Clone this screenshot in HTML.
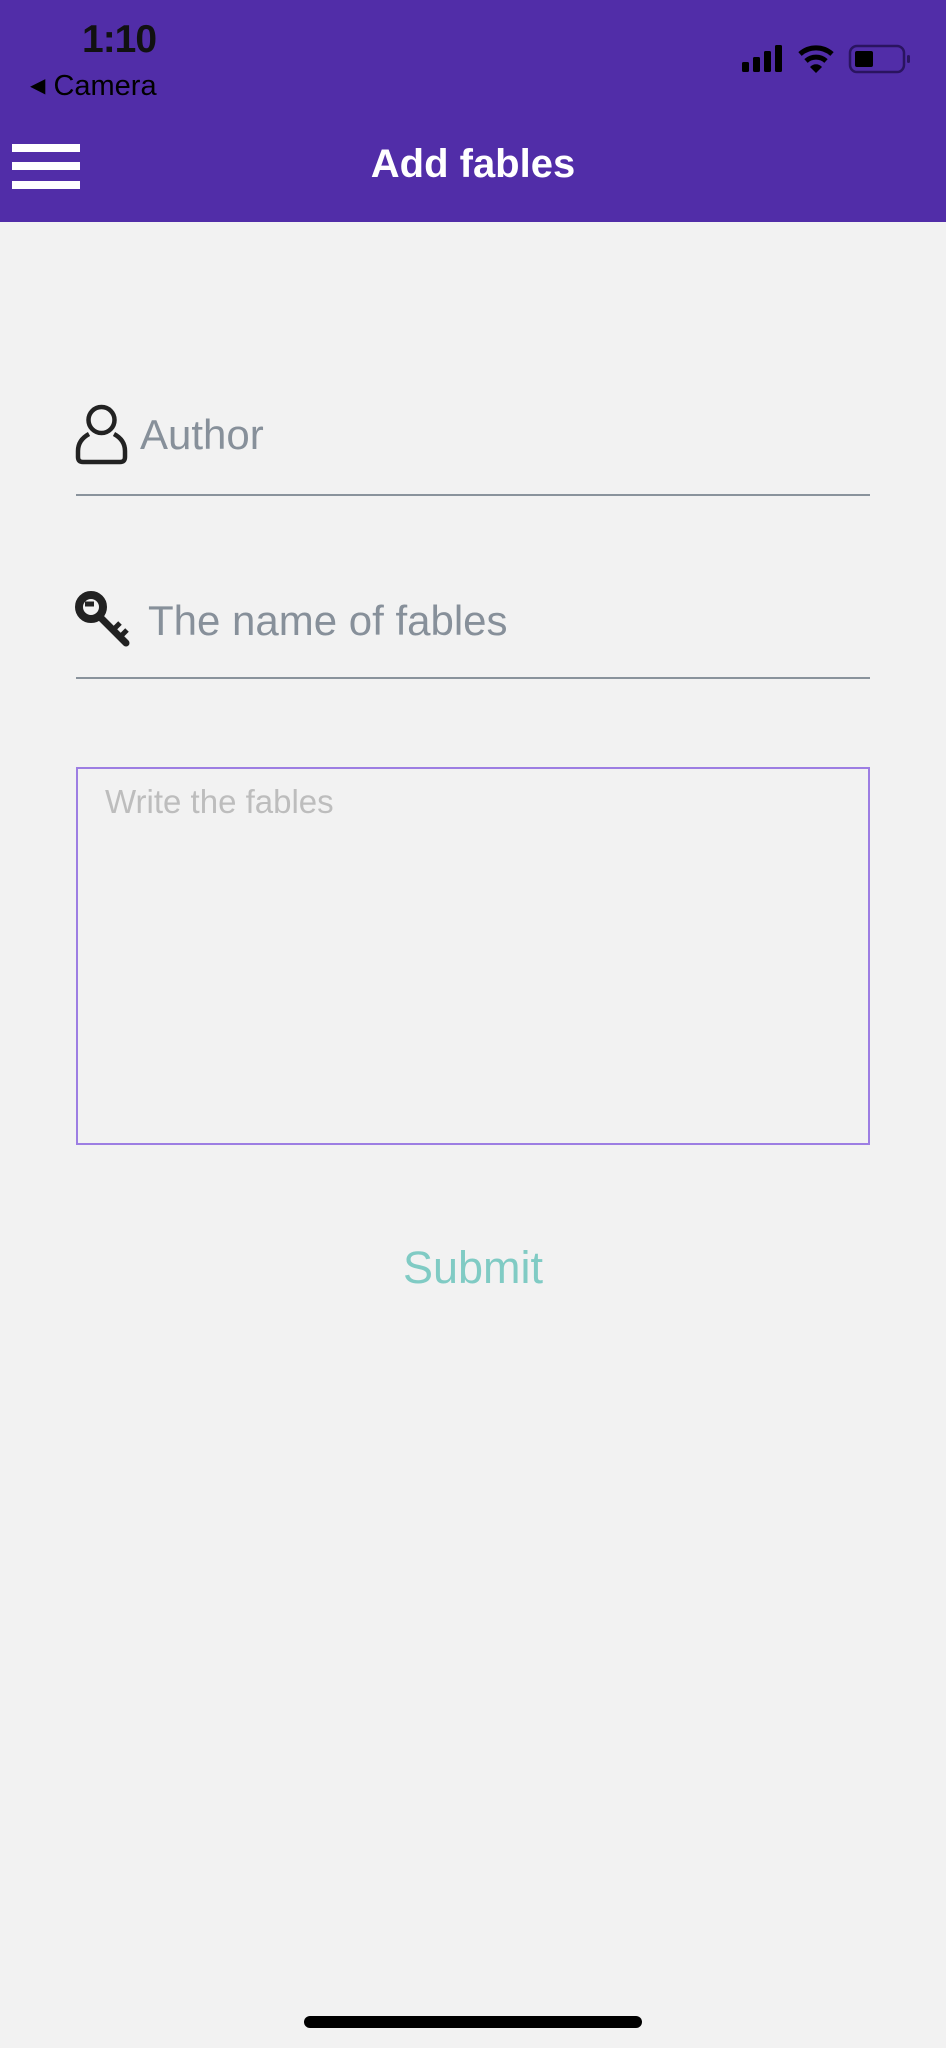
<!DOCTYPE html>
<html><head><meta charset="utf-8"><style>
*{margin:0;padding:0;box-sizing:border-box}
body{width:946px;height:2048px;background:#f2f2f2;position:relative;overflow:hidden;font-family:"Liberation Sans",sans-serif}
.a{position:absolute;line-height:1;white-space:nowrap}
</style></head><body>
<div class="a" style="left:0;top:0;width:946px;height:222px;background:#512da8"></div>
<div class="a" style="left:82px;top:20px;font-size:39px;font-weight:bold;color:#111;letter-spacing:-1px">1:10</div>
<div class="a" style="left:30px;top:72px;font-size:29px;color:#000"><span style="font-size:20px;position:relative;top:-3px">◀</span> Camera</div>
<svg class="a" style="left:738px;top:40px" width="180" height="40" viewBox="0 0 180 40">
<rect x="4" y="22" width="7" height="10" rx="1.5" fill="#000"/>
<rect x="15" y="17" width="7" height="15" rx="1.5" fill="#000"/>
<rect x="26" y="11" width="7" height="21" rx="1.5" fill="#000"/>
<rect x="37" y="5" width="7" height="27" rx="1.5" fill="#000"/>
<path d="M62 14 A24 24 0 0 1 94 14" stroke="#000" stroke-width="5" fill="none"/>
<path d="M68 21 A15 15 0 0 1 88 21" stroke="#000" stroke-width="5" fill="none"/>
<path d="M72 27 L78 33 L84 27 A8 8 0 0 0 72 27Z" fill="#000"/>
<rect x="112" y="6" width="54" height="26" rx="7" stroke="#2a1460" stroke-width="2.5" fill="none"/>
<rect x="117" y="11" width="18" height="16" rx="2" fill="#000"/>
<rect x="169" y="15" width="3" height="8" rx="1.5" fill="#2a1460"/>
</svg>
<div class="a" style="left:12px;top:144px;width:68px;height:8px;background:#fff"></div>
<div class="a" style="left:12px;top:162px;width:68px;height:8px;background:#fff"></div>
<div class="a" style="left:12px;top:181px;width:68px;height:8px;background:#fff"></div>
<div class="a" style="left:0;width:946px;text-align:center;top:144px;font-size:40px;font-weight:bold;color:#fff">Add fables</div>

<svg class="a" style="left:74px;top:403px" width="56" height="62" viewBox="0 0 56 62">
<circle cx="27.5" cy="17" r="13" stroke="#222" stroke-width="4.5" fill="none"/>
<path d="M15 31 Q4 37 4 48 L4 54 Q4 59 9 59 L46 59 Q51 59 51 54 L51 48 Q51 37 40 31" stroke="#222" stroke-width="4.5" fill="none" stroke-linejoin="round"/>
</svg>
<div class="a" style="left:140px;top:414px;font-size:42px;color:#87909a">Author</div>
<div class="a" style="left:76px;top:494px;width:794px;height:2px;background:#8a939c"></div>

<svg class="a" style="left:74px;top:590px" width="62" height="58" viewBox="0 0 62 58">
<circle cx="17" cy="17" r="12" stroke="#222" stroke-width="8" fill="none"/>
<path d="M11 14 L20 14" stroke="#222" stroke-width="5"/>
<path d="M25 26 L52 53" stroke="#222" stroke-width="7" stroke-linecap="round"/>
<path d="M39 40 L46 33 M46 47 L53 40" stroke="#222" stroke-width="5"/>
</svg>
<div class="a" style="left:148px;top:600px;font-size:42px;color:#87909a">The name of fables</div>
<div class="a" style="left:76px;top:677px;width:794px;height:2px;background:#8a939c"></div>

<div class="a" style="left:76px;top:767px;width:794px;height:378px;border:2px solid #9d7ee3"></div>
<div class="a" style="left:105px;top:785px;font-size:33px;color:#bdbdbd">Write the fables</div>

<div class="a" style="left:0;width:946px;text-align:center;top:1245px;font-size:45px;color:#80cbc4">Submit</div>

<div class="a" style="left:304px;top:2016px;width:338px;height:12px;border-radius:6px;background:#000"></div>
</body></html>
